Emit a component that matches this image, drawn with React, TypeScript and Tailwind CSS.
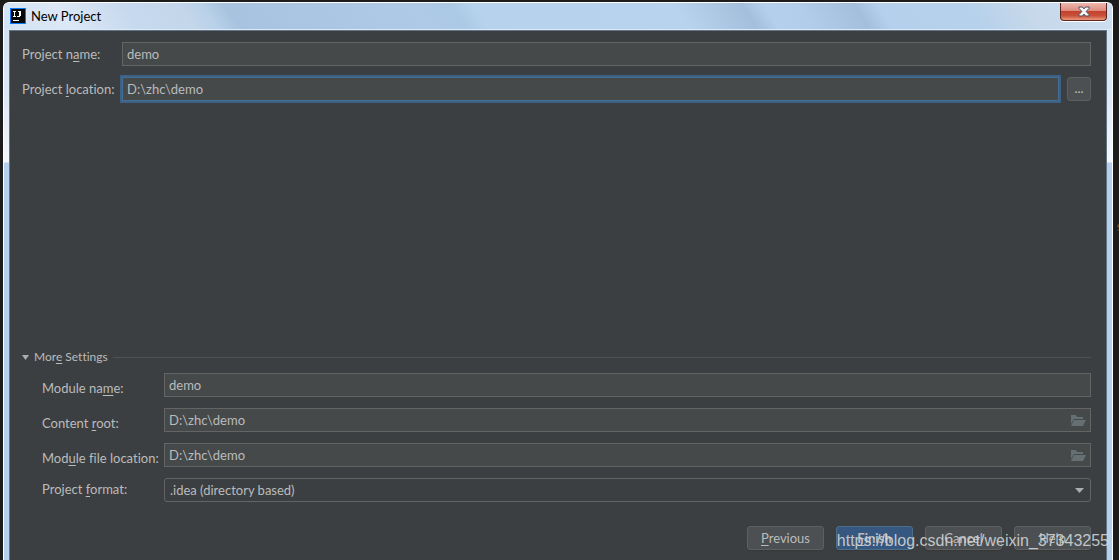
import type { ReactNode } from "react";

const field =
  "h-6 w-full min-w-0 rounded-none border border-[#646464] bg-[#45494a] px-1 pb-px text-[13px] leading-5 text-[#bbbbbb] outline-none";
const button =
  "flex h-6 w-[77px] items-center justify-center rounded-[3px] border border-[#5e6060] bg-[#4c5052] text-[13px] leading-5 shadow-[0_1px_1px_#36393a]";

function AppLogo() {
  return (
    <svg className="size-4" viewBox="0 0 16 16" aria-hidden="true" shapeRendering="crispEdges">
      <rect width="16" height="16" fill="#087cfa" />
      <rect x="1" y="1" width="14" height="14" fill="#060606" />
      <path d="M3 3h3v1H5v4h1v1H3V8h1V4H3zM8 3h3v5h-1v1H7V8h2V4H8z" fill="#fff" />
      <path d="M3 12h6v1H3z" fill="#fff" />
    </svg>
  );
}

function CloseGlyph() {
  return (
    <svg width="12" height="11" viewBox="0 0 12 11" aria-hidden="true">
      <path
        d="M1 1h3.4L6 2.9 7.6 1H11v1.4L8.2 5.5 11 8.6V10H7.6L6 8.1 4.4 10H1V8.6l2.8-3.1L1 2.4z"
        fill="#f6f6f6"
        stroke="#4b4f63"
        strokeWidth="1"
      />
    </svg>
  );
}

function FolderIcon() {
  return (
    <svg width="16" height="12" viewBox="0 0 16 12" aria-hidden="true">
      <path d="M1 1h5l1 2h6v2H4L1 10z" fill="#667073" />
      <path d="M4 6h12l-3 6H1z" fill="#667073" />
    </svg>
  );
}

function FolderField({ id }: { id: string }) {
  return (
    <div className="flex h-6 flex-1 items-center border border-[#646464] bg-[#45494a] pr-1">
      <input
        id={id}
        defaultValue={"D:\\zhc\\demo"}
        className="w-full min-w-0 flex-1 bg-transparent px-1 pb-px text-[13px] leading-5 outline-none"
      />
      <button type="button" aria-label="Browse">
        <FolderIcon />
      </button>
    </div>
  );
}

function Row({ id, label, low, children }: { id: string; label: ReactNode; low?: boolean; children: ReactNode }) {
  return (
    <div className="flex h-6">
      <label
        htmlFor={id}
        className={
          low
            ? "w-[122px] shrink-0 pt-1.5 leading-[18px] whitespace-nowrap"
            : "w-[122px] shrink-0 pt-0.5 leading-[18px] whitespace-nowrap"
        }
      >
        {label}
      </label>
      <div className="flex min-w-0 flex-1">{children}</div>
    </div>
  );
}

function U({ children }: { children: string }) {
  return <span className="underline underline-offset-2">{children}</span>;
}

export default function App() {
  return (
    <div className="relative flex min-h-screen overflow-hidden bg-[#1c1c1d] pt-0.5 pr-1.5 pl-[3px] font-['Lato','Open_Sans',sans-serif] text-[13px] text-[#bbbbbb] [font-variant-ligatures:none]">
      <div className="flex min-w-0 flex-1 flex-col rounded-t-md border-x border-t border-white bg-[linear-gradient(180deg,#cfdff1_0px,#dce7f5_90px,#f4f8fc_159px,#b4d0ec_160px,#b4d0ec_100%)]">
        <header className="flex h-[27px] shrink-0 items-start justify-between rounded-t-[5px] border-b border-[#dbe8f5] bg-[linear-gradient(57deg,#d3e2f3_0%,#dce8f6_6%,#c6d9ee_12%,#c3d6ea_17%,#b9d1e9_19%,#a8c3df_21%,#afcae6_38%,#abc8e4_41%,#b6d2ed_43%,#b7d3ee_61%,#a4bfdb_67%,#b4d0ec_69%,#b2cdea_72%,#a4bfdb_77%,#b4d0ec_79%,#b6d1eb_87%,#c6d8ea_92%,#cfdff2_100%)] pr-[5px] pl-1.5">
          <div className="flex items-center gap-[5px] pt-[5px] text-black">
            <AppLogo />
            <h1 className="text-[13px] leading-4">New Project</h1>
          </div>
          <button
            type="button"
            aria-label="Close"
            className="flex h-[18px] w-[47px] items-center justify-center rounded-b border-x border-b border-[#5d2520] bg-[linear-gradient(180deg,#efb7ad_0%,#dc8d80_45%,#c4422b_50%,#c8503a_75%,#e99a7c_100%)] shadow-[0_1px_0_#ffffff]"
          >
            <CloseGlyph />
          </button>
        </header>

        <main className="mx-[5px] flex flex-1 flex-col border-x border-t border-[#627485] bg-[#3c3f41] pt-[11px] pr-[15px] pb-2.5 pl-3">
          <div className="flex flex-col gap-[11px]">
            <div className="flex items-center">
              <label htmlFor="project-name" className="w-[100px] shrink-0 leading-[18px] whitespace-nowrap">
                Project n<U>a</U>me:
              </label>
              <input id="project-name" defaultValue="demo" className={field} />
            </div>
            <div className="flex items-center">
              <label htmlFor="project-location" className="w-[100px] shrink-0 leading-[18px] whitespace-nowrap">
                Project <U>l</U>ocation:
              </label>
              <input
                id="project-location"
                defaultValue={"D:\\zhc\\demo"}
                className="h-6 w-full min-w-0 border border-[#466d94] bg-[#45494a] px-1 pb-px text-[13px] leading-5 ring-2 ring-[#3d6185] outline-none"
              />
              <button
                type="button"
                className="ml-2 flex h-6 w-6 shrink-0 items-center justify-center rounded-[3px] border border-[#5e6060] bg-[#4c5052] text-[13px]"
              >
                ...
              </button>
            </div>
          </div>

          <div className="min-h-6 flex-1" />

          <section>
            <button type="button" className="flex w-full items-center gap-[5px] text-[12px] leading-[18px]">
              <svg width="7" height="5" viewBox="0 0 7 5" aria-hidden="true">
                <path d="M0 0h7L3.5 5z" fill="#adadad" />
              </svg>
              <span>
                Mor<U>e</U> Settings
              </span>
              <span className="h-px flex-1 bg-[#515151]" />
            </button>
            <div className="flex flex-col gap-[11px] pt-[7px] pl-5">
              <Row id="module-name" low label={<>Module na<U>m</U>e:</>}>
                <input id="module-name" defaultValue="demo" className={field} />
              </Row>
              <Row id="content-root" low label={<>Content <U>r</U>oot:</>}>
                <FolderField id="content-root" />
              </Row>
              <Row id="module-file" low label={<>Mod<U>u</U>le file location:</>}>
                <FolderField id="module-file" />
              </Row>
              <Row id="project-format" label={<>Project <U>f</U>ormat:</>}>
                <div className="relative flex-1">
                  <select
                    id="project-format"
                    className="h-6 w-full appearance-none rounded-[3px] border border-[#646464] bg-[#3c3f41] px-[5px] text-[13px] leading-5 outline-none"
                  >
                    <option>.idea (directory based)</option>
                  </select>
                  <svg width="9" height="5" viewBox="0 0 9 5" className="pointer-events-none absolute top-2.5 right-[7px]" aria-hidden="true">
                    <path d="M0 0h9L4.5 5z" fill="#adadad" />
                  </svg>
                </div>
              </Row>
            </div>
          </section>

          <footer className="flex justify-end gap-3 pt-6">
            <button type="button" className={button}>
              <span>
                <U>P</U>revious
              </span>
            </button>
            <button
              type="button"
              className="flex h-6 w-[77px] items-center justify-center rounded-[3px] border border-[#4c708c] bg-[#365880] text-[13px] leading-5 font-bold shadow-[0_1px_1px_#36393a]"
            >
              <span>
                <U>F</U>inish
              </span>
            </button>
            <button type="button" className={button}>
              Cancel
            </button>
            <button type="button" className={button}>
              Help
            </button>
          </footer>
        </main>
      </div>
      <span className="absolute top-[219px] left-[1116px] font-['Liberation_Mono',monospace] text-[13px] leading-[18px] text-[#8a5a2c]">
        s
      </span>
      <p className="pointer-events-none absolute right-2.5 bottom-2 font-['Liberation_Sans',sans-serif] text-[16px] leading-[22px] text-[#d3d5d6]/90">
        https://blog.csdn.net/weixin_37343255
      </p>
    </div>
  );
}
